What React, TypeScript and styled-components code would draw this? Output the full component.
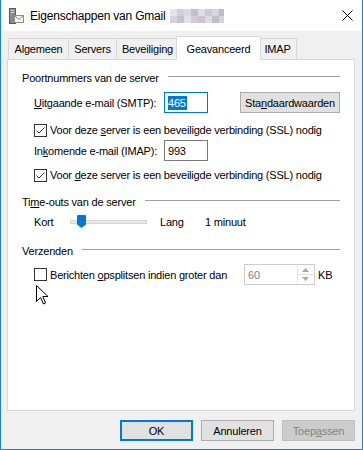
import React from "react";
import styled, { createGlobalStyle } from "styled-components";

const GlobalStyle = createGlobalStyle`
  html, body {
    margin: 0;
    padding: 0;
    background: #f0f0f0;
  }
  body {
    font-family: "Liberation Sans", Arial, sans-serif;
    font-size: 11px;
    letter-spacing: -0.2px;
    color: #000;
  }
`;

const Window = styled.div`
  position: relative;
  width: 363px;
  height: 450px;
  box-sizing: border-box;
  border: 1px solid #1883d7;
  border-top: none;
  background: #f0f0f0;
  display: flex;
  flex-direction: column;
`;

const TitleBar = styled.div`
  height: 31px;
  flex: none;
  display: flex;
  align-items: center;
  padding-left: 7px;
  background: #fff;
`;

const Title = styled.span`
  margin-left: 6px;
  font-size: 12px;
  white-space: nowrap;
`;

const Redacted = styled.svg`
  margin-left: 4px;
  flex: none;
`;

const CloseButton = styled.svg`
  margin-left: auto;
  margin-right: 9px;
  flex: none;
`;

const Content = styled.div`
  padding: 5px 7px 0 6px;
  display: flex;
  flex-direction: column;
`;

const TabStrip = styled.div`
  height: 24px;
  display: flex;
  align-items: flex-end;
  padding-left: 1px;
`;

const Tab = styled.div<{ $w: number; $active?: boolean }>`
  box-sizing: border-box;
  width: ${(p) => p.$w}px;
  height: ${(p) => (p.$active ? 24 : 22)}px;
  margin: ${(p) => (p.$active ? "0 -3px 0 -2px" : "0 -1px 0 0")};
  padding-bottom: ${(p) => (p.$active ? 0 : 1)}px;
  border: 1px solid #d9d9d9;
  border-bottom: none;
  background: ${(p) => (p.$active ? "#fff" : "#f0f0f0")};
  position: ${(p) => (p.$active ? "relative" : "static")};
  z-index: ${(p) => (p.$active ? 1 : "auto")};
  display: flex;
  align-items: center;
  justify-content: center;
  white-space: nowrap;
`;

const Panel = styled.div`
  position: relative;
  margin-top: -1px;
  height: 352px;
  box-sizing: border-box;
  border: 1px solid #d9d9d9;
  background: #fff;
  padding: 10px 14px 0 14px;
  display: flex;
  flex-direction: column;
`;

const GroupHeader = styled.div<{ $mt: number }>`
  display: flex;
  align-items: center;
  height: 16px;
  margin-top: ${(p) => p.$mt}px;
  white-space: nowrap;
`;

const GroupLine = styled.div`
  flex: 1;
  height: 1px;
  background: #a0a0a0;
  margin-left: 9px;
  margin-bottom: 4px;
`;

const Row = styled.div<{ $h: number; $mt: number }>`
  display: flex;
  align-items: center;
  height: ${(p) => p.$h}px;
  margin-top: ${(p) => p.$mt}px;
  padding-left: 12px;
  white-space: nowrap;
`;

const Label = styled.span<{ $w?: number }>`
  width: ${(p) => (p.$w ? `${p.$w}px` : "auto")};
  flex: none;
`;

const Edit = styled.div<{ $focused?: boolean }>`
  box-sizing: border-box;
  width: 44px;
  height: 21px;
  border: 1px solid ${(p) => (p.$focused ? "#0078d7" : "#7a7a7a")};
  padding-left: 3px;
  display: flex;
  align-items: center;
  background: #fff;
`;

const Selected = styled.span`
  background: #0078d7;
  color: #fff;
  line-height: 14px;
  padding-right: 1px;
`;

const PushButton = styled.div<{ $w: number; $ml?: number; $variant?: "default" | "disabled" }>`
  box-sizing: border-box;
  width: ${(p) => p.$w}px;
  height: 21px;
  margin-left: ${(p) => p.$ml ?? 0}px;
  display: flex;
  align-items: center;
  justify-content: center;
  background: ${(p) => (p.$variant === "disabled" ? "#cccccc" : "#e1e1e1")};
  border: ${(p) =>
    p.$variant === "default"
      ? "2px solid #0078d7"
      : p.$variant === "disabled"
      ? "1px solid #bfbfbf"
      : "1px solid #adadad"};
  color: ${(p) => (p.$variant === "disabled" ? "#838383" : "#000")};
  white-space: nowrap;
`;

const CheckBox = styled.span`
  box-sizing: border-box;
  width: 13px;
  height: 13px;
  flex: none;
  border: 1px solid #333;
  background: #fff;
  margin-right: 3px;
  display: flex;
`;

const Track = styled.div`
  position: relative;
  box-sizing: border-box;
  width: 77px;
  height: 4px;
  flex: none;
  margin-right: 13px;
  background: #e7eaea;
  border: 1px solid #d6d6d6;
`;

const Thumb = styled.svg`
  position: absolute;
  left: 6px;
  top: -6px;
`;

const SpinBox = styled.div`
  box-sizing: border-box;
  width: 71px;
  height: 21px;
  flex: none;
  margin-right: 3px;
  border: 1px solid #cccccc;
  background: #fff;
  display: flex;
`;

const SpinValue = styled.span`
  flex: 1;
  padding-left: 3px;
  display: flex;
  align-items: center;
  color: #838383;
`;

const SpinButtons = styled.div`
  width: 15px;
  margin: 1px 1px 1px 0;
  display: flex;
  flex-direction: column;
  border-left: 1px solid #e3e3e3;
`;

const SpinHalf = styled.div<{ $top?: boolean }>`
  flex: 1;
  display: flex;
  align-items: center;
  justify-content: center;
  border-bottom: ${(p) => (p.$top ? "1px solid #e3e3e3" : "none")};
`;

const Cursor = styled.svg`
  position: absolute;
  left: 28px;
  top: 225px;
`;

const Footer = styled.div`
  display: flex;
  justify-content: flex-end;
  gap: 8px;
  margin-top: 9px;
`;

const Key = styled.u`
  text-decoration-thickness: 1px;
  text-underline-offset: 1px;
`;

const Check = () => (
  <svg width="11" height="11" viewBox="0 0 11 11">
    <polyline points="1.5,5.5 4,8 9.5,2.5" fill="none" stroke="#333" strokeWidth="1" />
  </svg>
);

const mosaic = [
  ["#e6e2ea", "#d2cdd8", "#dcd8e0", "#c4bfcb", "#e0dce4", "#cdc8d3", "#d8d4dd", "#bfbac6"],
  ["#d8d4de", "#c6c1cc", "#e4e0e8", "#d0cbd6", "#c8c3ce", "#dedae3", "#c2bdc8", "#d6d2db"],
];

const App: React.FC = () => {
  return (
    <>
      <GlobalStyle />
      <Window>
        <TitleBar>
          <svg width="16" height="16" viewBox="0 0 16 16">
            <rect x="1.5" y="0.5" width="6" height="15" fill="#8a8a8a" stroke="#5e5e5e" />
            <rect x="2.5" y="2" width="4" height="1" fill="#cfcfcf" />
            <rect x="2.5" y="4" width="4" height="1" fill="#cfcfcf" />
            <rect x="3" y="7" width="1" height="1" fill="#6fd36f" />
            <rect x="6.5" y="7.5" width="9" height="7" fill="#f4f4f4" stroke="#8c8c8c" />
            <polyline points="6.5,7.5 11,11.5 15.5,7.5" fill="none" stroke="#8c8c8c" />
          </svg>
          <Title>Eigenschappen van Gmail</Title>
          <Redacted width="54" height="14" viewBox="0 0 54 14">
            {mosaic.map((row, r) =>
              row.map((c, i) => <rect key={`${r}-${i}`} x={i * 7} y={r * 7} width="7" height="7" fill={c} />)
            )}
          </Redacted>
          <CloseButton width="11" height="11" viewBox="0 0 11 11">
            <path d="M0.5 0.5 L10.5 10.5 M10.5 0.5 L0.5 10.5" stroke="#000" strokeWidth="1" />
          </CloseButton>
        </TitleBar>

        <Content>
          <TabStrip>
            <Tab $w={61}>Algemeen</Tab>
            <Tab $w={49}>Servers</Tab>
            <Tab $w={63}>Beveiliging</Tab>
            <Tab $w={85} $active>
              Geavanceerd
            </Tab>
            <Tab $w={39}>IMAP</Tab>
          </TabStrip>

          <Panel>
            <GroupHeader $mt={0}>
              <Label>Poortnummers van de server</Label>
              <GroupLine />
            </GroupHeader>
            <Row $h={21} $mt={6}>
              <Label $w={130}>
                <Key>U</Key>itgaande e-mail (SMTP):
              </Label>
              <Edit $focused>
                <Selected>465</Selected>
              </Edit>
              <PushButton $w={100} $ml={32}>
                Sta<Key>n</Key>daardwaarden
              </PushButton>
            </Row>
            <Row $h={18} $mt={8}>
              <CheckBox>
                <Check />
              </CheckBox>
              <Label>
                Voor deze <Key>s</Key>erver is een beveiligde verbinding (SSL) nodig
              </Label>
            </Row>
            <Row $h={21} $mt={1}>
              <Label $w={130}>
                In<Key>k</Key>omende e-mail (IMAP):
              </Label>
              <Edit>993</Edit>
            </Row>
            <Row $h={18} $mt={5}>
              <CheckBox>
                <Check />
              </CheckBox>
              <Label>
                Voor <Key>d</Key>eze server is een beveiligde verbinding (SSL) nodig
              </Label>
            </Row>

            <GroupHeader $mt={10}>
              <Label>
                Ti<Key>m</Key>e-outs van de server
              </Label>
              <GroupLine />
            </GroupHeader>
            <Row $h={16} $mt={4}>
              <Label $w={36}>Kort</Label>
              <Track>
                <Thumb width="9" height="13" viewBox="0 0 9 13">
                  <path d="M0 1 Q0 0 1 0 H8 Q9 0 9 1 V9.5 L4.5 13 L0 9.5 Z" fill="#0078d7" />
                </Thumb>
              </Track>
              <Label $w={45}>Lang</Label>
              <Label>1 minuut</Label>
            </Row>

            <GroupHeader $mt={13}>
              <Label>Verzenden</Label>
              <GroupLine />
            </GroupHeader>
            <Row $h={21} $mt={5}>
              <CheckBox />
              <Label $w={194}>
                Berichten <Key>o</Key>psplitsen indien groter dan
              </Label>
              <SpinBox>
                <SpinValue>60</SpinValue>
                <SpinButtons>
                  <SpinHalf $top>
                    <svg width="7" height="4" viewBox="0 0 7 4">
                      <path d="M0 4 L3.5 0 L7 4 Z" fill="#a8a8a8" />
                    </svg>
                  </SpinHalf>
                  <SpinHalf>
                    <svg width="7" height="4" viewBox="0 0 7 4">
                      <path d="M0 0 L3.5 4 L7 0 Z" fill="#a8a8a8" />
                    </svg>
                  </SpinHalf>
                </SpinButtons>
              </SpinBox>
              <Label>KB</Label>
            </Row>

            <Cursor width="13" height="20" viewBox="0 0 13 20">
              <path
                d="M0.5 0.5 L0.5 16.5 L4.5 12.5 L7.5 19 L9.5 18 L6.8 11.5 L12 11.5 Z"
                fill="#fff"
                stroke="#000"
                strokeWidth="1"
                strokeLinejoin="miter"
              />
            </Cursor>
          </Panel>

          <Footer>
            <PushButton $w={73} $variant="default">
              OK
            </PushButton>
            <PushButton $w={73}>Annuleren</PushButton>
            <PushButton $w={73} $variant="disabled">
              Toep<Key>a</Key>ssen
            </PushButton>
          </Footer>
        </Content>
      </Window>
    </>
  );
};

export default App;
